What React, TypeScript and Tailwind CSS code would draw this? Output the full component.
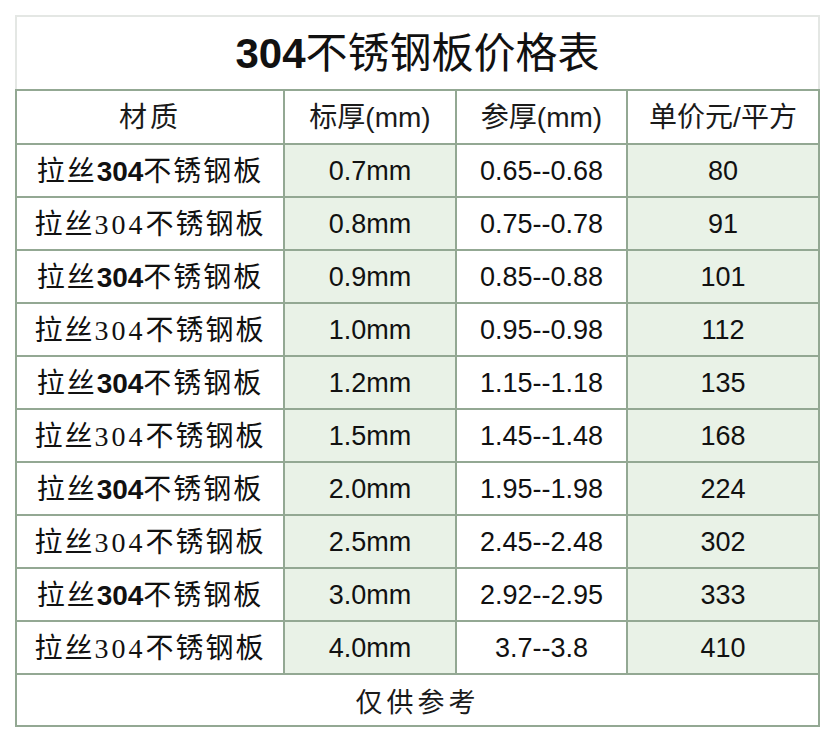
import React from "react";

const rows = [
  ["0.7mm", "0.65--0.68", "80"],
  ["0.8mm", "0.75--0.78", "91"],
  ["0.9mm", "0.85--0.88", "101"],
  ["1.0mm", "0.95--0.98", "112"],
  ["1.2mm", "1.15--1.18", "135"],
  ["1.5mm", "1.45--1.48", "168"],
  ["2.0mm", "1.95--1.98", "224"],
  ["2.5mm", "2.45--2.48", "302"],
  ["3.0mm", "2.92--2.95", "333"],
  ["4.0mm", "3.7--3.8", "410"],
];

const cjk = "font-['Liberation_Sans','Noto_Sans_CJK_SC',sans-serif]";

export default function App() {
  return (
    <div className="w-[835px] h-[744px] bg-white pt-[15px] pl-[15px]">
      <div className="w-[805px]">
        <div
          className={`h-[74px] border-2 border-b-0 border-[#e4e7e4] bg-white flex items-center justify-center text-[42px] text-[#111] ${cjk}`}
        >
          <span className="font-bold font-['Liberation_Sans',sans-serif]">304</span>
          <span>不锈钢板价格表</span>
        </div>
        <div className="grid grid-cols-[266px_170px_169px_190px] grid-rows-[52px_repeat(10,51px)_50px] gap-[2px] p-[2px] bg-[#93a893]">
          {["材质", "标厚(mm)", "参厚(mm)", "单价元/平方"].map((h, i) => (
            <div
              key={h}
              className={`bg-white flex items-center justify-center pt-[2px] text-[28px] text-[#1a1a1a] ${cjk} ${i === 0 ? "tracking-[3px]" : ""}`}
            >
              {h}
            </div>
          ))}
          {rows.map((r, i) => (
            <React.Fragment key={i}>
              <div
                className={`bg-white flex items-center justify-center pt-[2px] text-[28px] text-[#111] ${cjk} tracking-[2px]`}
              >
                <span>拉丝</span>
                {i % 2 === 0 ? (
                  <span className="font-bold font-['Liberation_Sans',sans-serif] tracking-normal">304</span>
                ) : (
                  <span className="font-['Liberation_Serif',serif] tracking-[3px]">304</span>
                )}
                <span>不锈钢板</span>
              </div>
              <div className="bg-[#e9f2e7] flex items-center justify-center pt-[2px] text-[27px] text-[#111] font-['Liberation_Sans',sans-serif]">
                {r[0]}
              </div>
              <div className="bg-white flex items-center justify-center pt-[2px] text-[27px] text-[#111] font-['Liberation_Sans',sans-serif]">
                {r[1]}
              </div>
              <div className="bg-[#e9f2e7] flex items-center justify-center pt-[2px] text-[27px] text-[#111] font-['Liberation_Sans',sans-serif]">
                {r[2]}
              </div>
            </React.Fragment>
          ))}
          <div
            className={`col-span-4 bg-white flex items-center justify-center pt-[6px] text-[27px] text-[#1a1a1a] tracking-[4px] ${cjk}`}
          >
            仅供参考
          </div>
        </div>
      </div>
    </div>
  );
}
